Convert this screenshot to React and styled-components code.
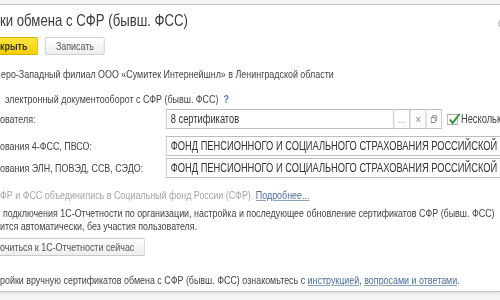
import styled, { createGlobalStyle } from "styled-components"

// the form in the shot is narrowed horizontally, so the page is laid out
// at full width and squeezed by SX; u() turns a shot x-distance into layout px
const SX = 0.775
const u = px => `${(px / SX).toFixed(2)}px`

const Global = createGlobalStyle`
  html, body {
    margin: 0;
    padding: 0;
    background: #f2f2f2;
    overflow: hidden;
  }
  body {
    font-family: "Liberation Sans", Arial, sans-serif;
    font-size: 11.5px;
    color: #444;
  }
`

const Window = styled.div`
  width: 500px;
  height: 300px;
  background: #f4f4f4;
  overflow: hidden;
`

const Form = styled.div`
  margin-top: 4px;
  height: 286px;
  background: #fff;
  border-top: 1px solid #c4c4c4;
  border-bottom: 1px solid #c9c9c9;
  box-shadow: 0 1px 3px rgba(0, 0, 0, 0.12);
  overflow: hidden;
`

const Squeeze = styled.div`
  width: ${u(500)};
  transform: scaleX(${SX});
  transform-origin: left top;
  display: flex;
  flex-direction: column;
  position: relative;
  white-space: nowrap;
`

const Title = styled.h1`
  margin: 0;
  padding: 6px 0;
  height: 20px;
  line-height: 20px;
  font-size: 17px;
  font-weight: normal;
  color: #3d3d3d;
`

const CornerIcon = styled.span`
  position: absolute;
  right: ${u(-3)};
  top: 10px;
  font-size: 13px;
  color: #a0a0a0;
`

const Toolbar = styled.div`
  display: flex;
  gap: ${u(7)};
  align-items: center;
  margin-top: ${p => p.$mt || 0}px;
`

const Button = styled.div`
  height: 16px;
  line-height: 16px;
  padding: 0 ${u(10)};
  border: 1px solid ${p => (p.$primary ? "#d4b300" : "#c9c9c9")};
  border-radius: 2px;
  background: ${p =>
    p.$primary
      ? "linear-gradient(#ffe640, #f6cf00)"
      : "linear-gradient(#ffffff, #eeeeee)"};
  color: ${p => (p.$primary ? "#333" : "#555")};
  font-weight: ${p => (p.$primary ? "bold" : "normal")};
  ${p => p.$cut && "border-left: none; border-radius: 0 2px 2px 0; padding-left: 0;"}
`

const Line = styled.div`
  height: 13px;
  line-height: 13px;
  margin-top: ${p => p.$mt || 0}px;
  color: ${p => (p.$muted ? "#a5a5a5" : "#444")};
  padding-left: ${p => u(p.$pl || 0)};
`

const Help = styled.span`
  color: #3f80c4;
  font-weight: bold;
  margin-left: ${u(5)};
`

const Link = styled.span`
  color: #4b6f99;
  text-decoration: underline;
  text-decoration-color: #8aa4c2;
`

const FieldRow = styled.div`
  display: grid;
  grid-template-columns: ${u(166)} auto;
  align-items: center;
  margin-top: ${p => p.$mt || 0}px;
`

const FieldGroup = styled.div`
  display: flex;
  align-items: center;
`

const Input = styled.div`
  box-sizing: border-box;
  height: 20px;
  line-height: 18px;
  width: ${p => u(p.$w)};
  padding-left: ${u(4)};
  border: 1px solid #bdbdbd;
  background: #fff;
  color: #333;
  font-size: 12px;
  overflow: hidden;
`

const InputButton = styled.div`
  box-sizing: border-box;
  width: ${u(16)};
  height: 20px;
  border: 1px solid #bdbdbd;
  border-left: 1px solid #dedede;
  display: flex;
  align-items: center;
  justify-content: center;
  color: #9a9a9a;
  font-size: 10px;
  background: #fff;
`

const Check = styled.div`
  display: flex;
  align-items: center;
  gap: ${u(3)};
  margin-left: ${u(5)};
  color: #444;
  font-size: 12px;
`

const CheckBox = styled.span`
  box-sizing: border-box;
  width: ${u(11)};
  height: 11px;
  border: 1px solid #a9a9a9;
  background: #fff;
  position: relative;
  svg {
    position: absolute;
    left: 0;
    top: -3px;
  }
`

export default function App() {
  return (
    <>
      <Global />
      <Window>
        <Form>
          <Squeeze>
            <Title>ки обмена с СФР (бывш. ФСС)</Title>
            <CornerIcon>ċ</CornerIcon>
            <Toolbar>
              <Button $primary $cut>крыть</Button>
              <Button>Записать</Button>
            </Toolbar>
            <Line $mt={13} $pl={1}>еро-Западный филиал ООО «Сумитек Интернейшнл» в Ленинградской области</Line>
            <Line $mt={12} $pl={5}>
              электронный документооборот с СФР (бывш. ФСС)<Help>?</Help>
            </Line>
            <FieldRow $mt={3}>
              <div>ователя:</div>
              <FieldGroup>
                <Input $w={228}>8 сертификатов</Input>
                <InputButton>…</InputButton>
                <InputButton>✕</InputButton>
                <InputButton>
                  <svg width="12" height="10" viewBox="0 0 12 10" fill="none" stroke="#8a8a8a" strokeWidth="1">
                    <rect x="2.5" y="3.5" width="5" height="5" />
                    <path d="M4.5 3.5V1.5h5v5h-2" />
                  </svg>
                </InputButton>
                <Check>
                  <CheckBox>
                    <svg width="17" height="14" viewBox="0 0 17 14" fill="none" stroke="#2f9c3a" strokeWidth="2.4">
                      <path d="M2.5 7.5l3.5 3.5L15 2" />
                    </svg>
                  </CheckBox>
                  Несколько
                </Check>
              </FieldGroup>
            </FieldRow>
            <FieldRow $mt={7}>
              <div>ования 4-ФСС, ПВСО:</div>
              <Input $w={360}>ФОНД ПЕНСИОННОГО И СОЦИАЛЬНОГО СТРАХОВАНИЯ РОССИЙСКОЙ ФЕДЕРАЦИИ</Input>
            </FieldRow>
            <FieldRow $mt={2}>
              <div>ования ЭЛН, ПОВЭД, ССВ, СЭДО:</div>
              <Input $w={360}>ФОНД ПЕНСИОННОГО И СОЦИАЛЬНОГО СТРАХОВАНИЯ РОССИЙСКОЙ ФЕДЕРАЦИИ</Input>
            </FieldRow>
            <Line $mt={11} $muted>
              ФР и ФСС объединились в Социальный фонд России (СФР). <Link>Подробнее...</Link>
            </Line>
            <Line $mt={5} $pl={3}>подключения 1С-Отчетности по организации, настройка и последующее обновление сертификатов СФР (бывш. ФСС)</Line>
            <Line>ится автоматически, без участия пользователя.</Line>
            <Toolbar $mt={5}>
              <Button $cut>очиться к 1С-Отчетности сейчас</Button>
            </Toolbar>
            <Line $mt={18}>
              ройки вручную сертификатов обмена с СФР (бывш. ФСС) ознакомьтесь с <Link>инструкцией</Link>, <Link>вопросами и ответами</Link>.
            </Line>
          </Squeeze>
        </Form>
      </Window>
    </>
  )
}
